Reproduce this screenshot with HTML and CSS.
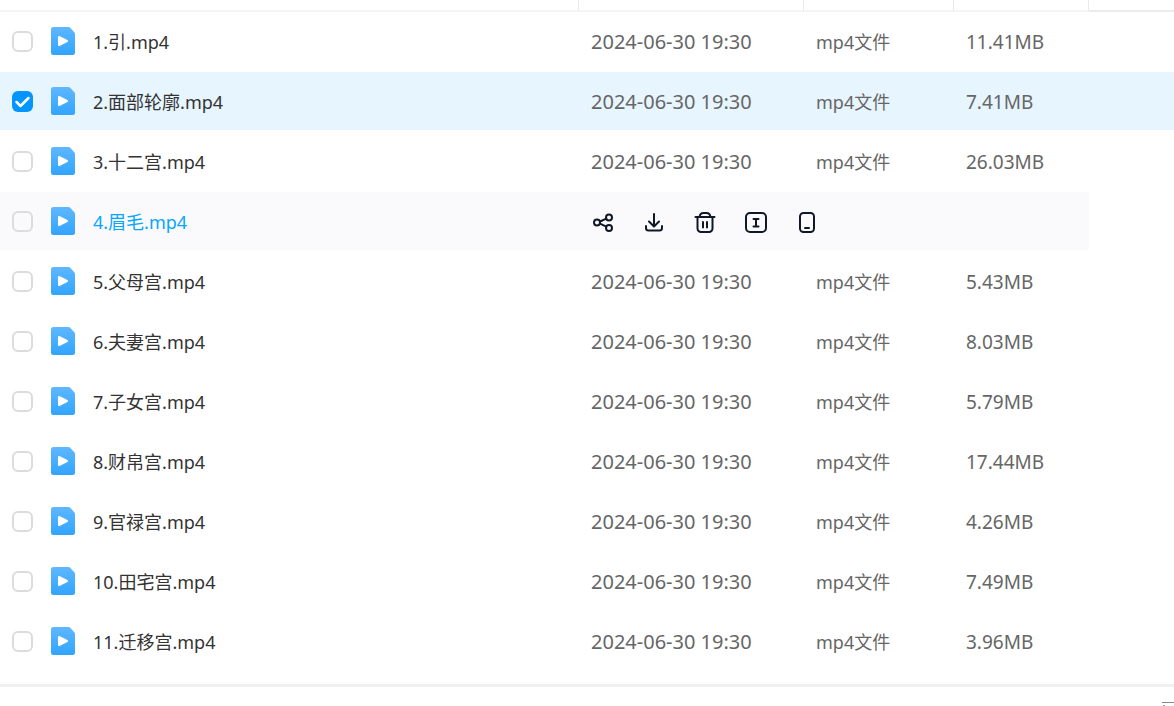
FILE: index.html
```html
<!DOCTYPE html>
<html lang="zh-CN">
<head>
    <meta charset="UTF-8">
    <meta name="viewport" content="width=device-width, initial-scale=1.0">
    <title>文件列表</title>
    <link rel="stylesheet" href="styles.css">
</head>
<body>
    <svg class="sprite" aria-hidden="true">
        <defs>
            <linearGradient id="file-fill" x1="0" y1="0" x2="0" y2="1">
                <stop offset="0" stop-color="#5fb7ff"/>
                <stop offset="1" stop-color="#31a4ff"/>
            </linearGradient>
        </defs>
        <symbol id="icon-video" viewBox="0 0 24 28">
            <path d="M2.500 0h15q1 0 1.700.7l4.100 4.500q.7.700.7 1.700V25.500a2.500 2.500 0 0 1-2.500 2.500H2.500A2.500 2.500 0 0 1 0 25.500V2.500A2.500 2.500 0 0 1 2.500 0z" fill="url(#file-fill)"/>
            <path d="M8 10v8l8-4z" fill="#fff" stroke="#fff" stroke-width="2" stroke-linejoin="round"/>
        </symbol>
    </svg>

    <table class="files">
        <colgroup>
            <col>
            <col class="col-date">
            <col class="col-type">
            <col class="col-size">
            <col class="col-end">
        </colgroup>
        <thead>
            <tr><th></th><th></th><th></th><th></th><th></th></tr>
        </thead>
        <tbody id="lista"></tbody>
    </table>

    <footer class="footer">
        <svg class="footer-mark" viewBox="0 0 12 4" aria-hidden="true">
            <path d="M0 .5h12" stroke="#888"/>
            <path d="M1 3.500h2" stroke="#99a"/>
        </svg>
    </footer>

    <script>
        const archivos = [
            { nombre: "1.引.mp4", peso: "11.41MB" },
            { nombre: "2.面部轮廓.mp4", peso: "7.41MB", estado: "selected" },
            { nombre: "3.十二宫.mp4", peso: "26.03MB" },
            { nombre: "4.眉毛.mp4", peso: "", estado: "active" },
            { nombre: "5.父母宫.mp4", peso: "5.43MB" },
            { nombre: "6.夫妻宫.mp4", peso: "8.03MB" },
            { nombre: "7.子女宫.mp4", peso: "5.79MB" },
            { nombre: "8.财帛宫.mp4", peso: "17.44MB" },
            { nombre: "9.官禄宫.mp4", peso: "4.26MB" },
            { nombre: "10.田宅宫.mp4", peso: "7.49MB" },
            { nombre: "11.迁移宫.mp4", peso: "3.96MB" }
        ];

        const acciones = [
            { titulo: "分享", icono: '<circle cx="6" cy="12.500" r="3"/><circle cx="18" cy="7.500" r="3"/><circle cx="18" cy="18" r="3"/><path d="M9 11.500l6.300-2.900M9 13.700l6.300 3"/>' },
            { titulo: "下载", icono: '<path d="M12 4v12M7 11.500l5 5 5-5M4 16v2a2.500 2.500 0 0 0 2.500 2.500h11a2.500 2.500 0 0 0 2.500-2.500v-2"/>' },
            { titulo: "删除", icono: '<path d="M2.500 7h19M6.500 7q.5-4 4-4h3q3.500 0 4 4M4.500 7v11.500a3.500 3.500 0 0 0 3.500 3.500h8a3.500 3.500 0 0 0 3.500-3.500V7M10 12v5.500M14 12v5.500"/>' },
            { titulo: "重命名", icono: '<rect x="2" y="3" width="20" height="19" rx="4"/><path d="M9.500 9h5M9.500 16.500h5M12 9v7.500"/>' },
            { titulo: "手机", icono: '<rect x="5" y="3" width="14" height="19" rx="3.500"/><path d="M10 18h4"/>' }
        ];

        const botones = acciones.map(a => `<button type="button" aria-label="${a.titulo}"><svg viewBox="0 0 24 24">${a.icono}</svg></button>`).join("");

        document.getElementById("lista").innerHTML = archivos.map((f, i) => `
            <tr class="${f.estado || ""}">
                <td class="name-cell">
                    <div class="name">
                        <input type="checkbox" id="archivo-${i}" ${f.estado === "selected" ? "checked" : ""}>
                        <svg class="file-icon"><use href="#icon-video"/></svg>
                        <label for="archivo-${i}">${f.nombre}</label>
                    </div>
                </td>
                ${f.estado === "active"
                    ? `<td colspan="3"><div class="actions">${botones}</div></td>`
                    : `<td class="date">2024-06-30 19:30</td><td>mp4文件</td><td class="size">${f.peso}</td>`}
                <td></td>
            </tr>
        `).join("");
    </script>
</body>
</html>
```
FILE: styles.css
```css
* {
    box-sizing: border-box;
}
body {
    margin: 0;
    background: #fff;
    color: #666;
    font-family: "Noto Sans", "Noto Sans CJK SC", sans-serif;
    font-size: 18px;
    line-height: 24px;
    overflow: hidden;
}
.sprite {
    position: absolute;
    width: 0;
    height: 0;
}
.files {
    width: 100%;
    table-layout: fixed;
    border-collapse: separate;
    border-spacing: 0;
}
.col-date {
    width: 225px;
}
.col-type {
    width: 150px;
}
.col-size {
    width: 135px;
}
.col-end {
    width: 85px;
}
th {
    height: 12px;
    padding: 0;
    border-right: 1px solid #e9e9ed;
    border-bottom: 2px solid #f5f5f7;
}
th:last-child {
    border-right: 0;
    border-bottom-color: #ececf0;
}
td {
    height: 60px;
    padding: 2px 0 0 12px;
    border-bottom: 2px solid #fff;
    white-space: nowrap;
}
.name-cell {
    padding-top: 0;
}
.date {
    font-size: 20px;
}
.size {
    font-size: 19px;
}
.selected td {
    background: #e7f5fe;
}
.active td {
    background: #fafafc;
}
.active td:last-child {
    background: #fff;
}
.name {
    display: flex;
    align-items: center;
    gap: 18px;
    color: #333;
}
.name label {
    padding-top: 2px;
}
.active .name {
    color: #06a7ff;
}
.name input {
    appearance: none;
    flex: none;
    width: 21px;
    height: 21px;
    margin: 0;
    border: 2px solid #dcdcde;
    border-radius: 6px;
    background: #fff;
}
.active .name input {
    background: #fafafc;
}
.name input:checked {
    border: 0;
    background: #0095ff url("data:image/svg+xml,%3Csvg xmlns='http://www.w3.org/2000/svg' viewBox='0 0 21 21'%3E%3Cpath d='M4.500 11l4 4 8-8' fill='none' stroke='white' stroke-width='2.500' stroke-linecap='round' stroke-linejoin='round'/%3E%3C/svg%3E");
}
.file-icon {
    flex: none;
    width: 24px;
    height: 28px;
}
.actions {
    display: flex;
    gap: 27px;
}
.actions button {
    width: 24px;
    height: 24px;
    padding: 0;
    border: 0;
    background: none;
    cursor: pointer;
}
.actions svg {
    display: block;
    width: 24px;
    height: 24px;
    fill: none;
    stroke: #101828;
    stroke-width: 2;
    stroke-linecap: round;
    stroke-linejoin: round;
}
.footer {
    display: flex;
    justify-content: flex-end;
    margin-top: 12px;
    padding-top: 15px;
    border-top: 3px solid #f0f0f0;
}
.footer-mark {
    width: 12px;
    height: 4px;
}
```
